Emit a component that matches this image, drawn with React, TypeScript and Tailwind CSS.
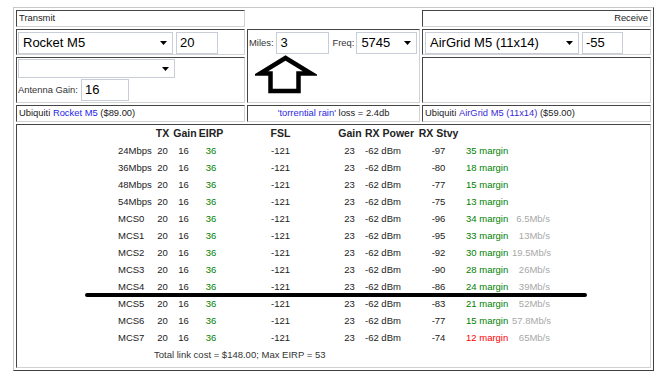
import React from "react";

const cellB =
  "border border-t-[#454545] border-l-[#454545] border-r-[#d2d2d2] border-b-[#d2d2d2]";

function Arrow() {
  return (
    <svg width="7" height="4" viewBox="0 0 7 4" className="shrink-0">
      <polygon points="0,0 7,0 3.5,4" fill="#000" />
    </svg>
  );
}

function Select({ cls, text }: { cls: string; text?: string }) {
  return (
    <div
      className={
        "flex items-center justify-between border border-[#c9cdd8] pl-[4px] pr-[5px] text-[13px] text-black " +
        cls
      }
    >
      <span className="whitespace-nowrap">{text}</span>
      <Arrow />
    </div>
  );
}

function Input({ cls, text }: { cls: string; text: string }) {
  return (
    <div
      className={
        "flex items-center border border-[#c9cdd8] pl-[3px] text-[13px] text-black " +
        cls
      }
    >
      {text}
    </div>
  );
}

type Row = { l: string; stvy: string; m: string; s: string; red?: boolean };
const rows: Row[] = [
  { l: "24Mbps", stvy: "-97", m: "35", s: "" },
  { l: "36Mbps", stvy: "-80", m: "18", s: "" },
  { l: "48Mbps", stvy: "-77", m: "15", s: "" },
  { l: "54Mbps", stvy: "-75", m: "13", s: "" },
  { l: "MCS0", stvy: "-96", m: "34", s: "6.5Mb/s" },
  { l: "MCS1", stvy: "-95", m: "33", s: "13Mb/s" },
  { l: "MCS2", stvy: "-92", m: "30", s: "19.5Mb/s" },
  { l: "MCS3", stvy: "-90", m: "28", s: "26Mb/s" },
  { l: "MCS4", stvy: "-86", m: "24", s: "39Mb/s" },
  { l: "MCS5", stvy: "-83", m: "21", s: "52Mb/s" },
  { l: "MCS6", stvy: "-77", m: "15", s: "57.8Mb/s" },
  { l: "MCS7", stvy: "-74", m: "12", s: "65Mb/s", red: true },
];

const cols =
  "grid grid-cols-[35px_19px_26px_26px_113px_26px_55px_41px_53px_40px] whitespace-nowrap";

export default function App() {
  return (
    <div
      className="relative w-[665px] h-[386px] bg-white pt-[7px] pl-[13px] text-[#222]"
      style={{ fontFamily: '"Liberation Sans", Arial, sans-serif' }}
    >
      <div className="w-[641px] border border-t-[#c8c8c8] border-l-[#c8c8c8] border-r-[#404040] border-b-[#404040] p-[2px]">
        <div className="grid grid-cols-[229px_173px_229px] grid-rows-[17px_26px_46px_17px_244px] gap-[2px] text-[9.4px]">
          {/* row 1 */}
          <div className={cellB + " flex items-center pl-[2px]"}>Transmit</div>
          <div />
          <div className={cellB + " flex items-center justify-end pr-[2px]"}>Receive</div>

          {/* row 2 */}
          <div className={cellB + " flex items-start pl-[1px] pt-[2px]"}>
            <Select cls="w-[155px] h-[22px]" text="Rocket M5" />
            <Input cls="ml-[3px] w-[42px] h-[22px]" text="20" />
          </div>
          <div className={cellB + " row-span-2 flex flex-col"}>
            <div className="flex items-center pl-[1px] pt-[2px]">
              <span className="text-[#333]">Miles:</span>
              <Input cls="ml-[3px] w-[53px] h-[22px]" text="3" />
              <span className="ml-[3px] text-[#333]">Freq:</span>
              <Select cls="ml-[2px] w-[61px] h-[22px]" text="5745" />
            </div>
            <svg width="62" height="40" viewBox="0 0 62 40" className="ml-[7px]">
              <polygon
                points="30.5,4 56,19.5 43.5,19.5 43.5,37 15.5,37 15.5,19.5 5,19.5"
                fill="none"
                stroke="#000"
                strokeWidth="4.5"
                strokeLinejoin="miter"
              />
            </svg>
          </div>
          <div className={cellB + " flex items-start pl-[2px] pt-[2px]"}>
            <Select cls="w-[154px] h-[22px]" text="AirGrid M5 (11x14)" />
            <Input cls="ml-[3px] w-[41px] h-[22px]" text="-55" />
          </div>

          {/* row 3 */}
          <div className={cellB + " flex flex-col pl-[1px] pt-[1px]"}>
            <Select cls="w-[157px] h-[19px]" />
            <div className="mt-[1px] flex items-center">
              <span className="text-[#333]">Antenna Gain:</span>
              <Input cls="ml-[3px] w-[48px] h-[22px]" text="16" />
            </div>
          </div>
          <div className={cellB} />

          {/* row 4 */}
          <div className={cellB + " flex items-center pl-[2px] whitespace-nowrap"}>
            Ubiquiti&nbsp;<span className="text-[#1e1ee6]">Rocket M5</span>&nbsp;($89.00)
          </div>
          <div className={cellB + " flex items-center justify-center whitespace-nowrap"}>
            <span className="text-[#2a2ae0]">'torrential rain'</span>&nbsp;loss = 2.4db
          </div>
          <div className={cellB + " flex items-center pl-[2px] whitespace-nowrap"}>
            Ubiquiti&nbsp;<span className="text-[#3a2ad8]">AirGrid M5 (11x14)</span>&nbsp;($59.00)
          </div>

          {/* row 5 */}
          <div className={cellB + " col-span-3 text-[9.5px]"}>
            <div className="ml-[101px]">
              <div className={cols + " h-[18px] items-center font-bold text-[10.5px] text-[#222]"}>
                <span />
                <span className="text-center">TX</span>
                <span className="text-center">Gain</span>
                <span className="text-center">EIRP</span>
                <span className="text-center">FSL</span>
                <span className="text-center">Gain</span>
                <span className="pl-[2px]">RX Power</span>
                <span className="text-center">RX Stvy</span>
                <span />
                <span />
              </div>
              {rows.map((r) => (
                <div key={r.l} className={cols + " h-[17px] items-center"}>
                  <span>{r.l}</span>
                  <span className="text-center">20</span>
                  <span className="text-center pr-[3px]">16</span>
                  <span className="text-center text-[#008000]">36</span>
                  <span className="text-center">-121</span>
                  <span className="text-center pr-[1px]">23</span>
                  <span className="pl-[2px]">-62 dBm</span>
                  <span className="text-center">{r.stvy}</span>
                  <span className={"pl-[7px] " + (r.red ? "text-[#ff0000]" : "text-[#008000]")}>
                    {r.m} margin
                  </span>
                  <span className="text-right pr-[2px] text-[#a8a8a8]">{r.s}</span>
                </div>
              ))}
              <div className="grid grid-cols-[35px_1fr] h-[17px] items-center whitespace-nowrap text-[#333]">
                <span />
                <span className="pl-[1px]">Total link cost = $148.00; Max EIRP = 53</span>
              </div>
            </div>
          </div>
        </div>
      </div>

      <div className="absolute left-[85px] top-[293px] w-[502px] h-[4px] rounded-full bg-black" />
    </div>
  );
}
